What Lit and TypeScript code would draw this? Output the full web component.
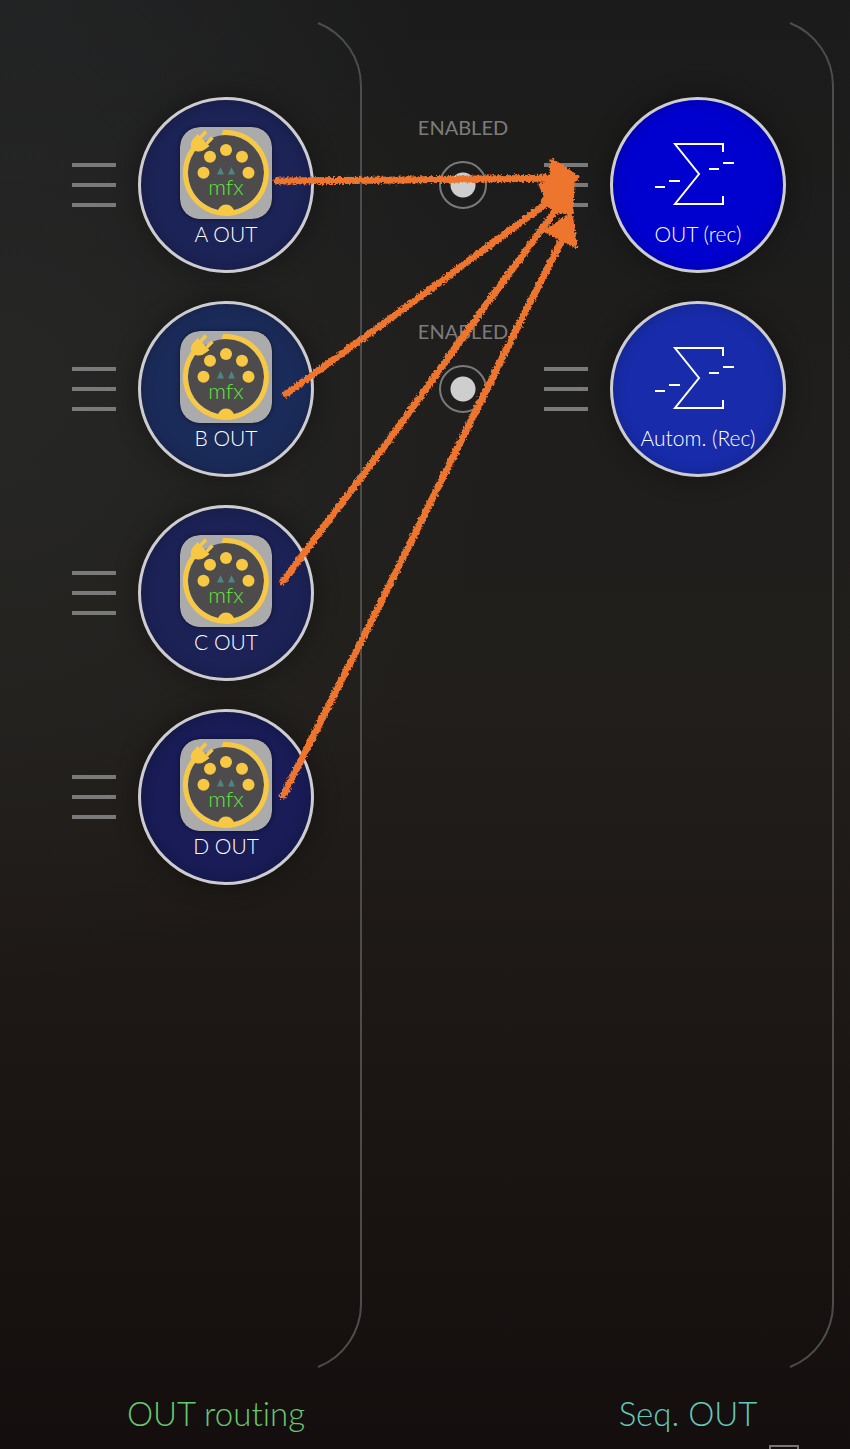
import { LitElement, html, css, svg, nothing } from "lit";
import { customElement, property } from "lit/decorators.js";

type Tone = "navy" | "steel" | "indigo" | "midnight" | "pure" | "royal";

interface PortData {
  label: string;
  tone: Tone;
  icon: "mfx" | "sum";
  enabled?: boolean;
}

const ROUTING: PortData[] = [
  { label: "A OUT", tone: "navy", icon: "mfx" },
  { label: "B OUT", tone: "steel", icon: "mfx" },
  { label: "C OUT", tone: "indigo", icon: "mfx" },
  { label: "D OUT", tone: "midnight", icon: "mfx" },
];

const SEQUENCER: PortData[] = [
  { label: "OUT (rec)", tone: "pure", icon: "sum", enabled: true },
  { label: "Autom. (Rec)", tone: "royal", icon: "sum", enabled: true },
];

const mfxIcon = html`<svg class="icon plate" viewBox="0 0 92 92" aria-hidden="true">
  <rect width="92" height="92" rx="20" fill="#ababab" />
  <circle cx="46" cy="46" r="38" fill="#4d4b4b" />
  <path d="M43 5.5 A40.5 40.5 0 1 1 17 17.5" fill="none" stroke="#f7c843" stroke-width="5" />
  <path d="M45 3.200 Q43 4 41 7.500 L47 8.200 L50 3.300 Z" fill="#f7c843" />
  <g fill="#f7c843">
    <path d="M17.500 7 L29.500 19 L27 21 Q21 26 15.500 24 L11 20 Q9.500 15 15.500 9.500 Z" />
    <path d="M20.500 10.500 L26 4.500 M26.500 16.500 L32.500 10.500" stroke="#f7c843" stroke-width="3.500" />
    <circle cx="23.500" cy="45.700" r="6" />
    <circle cx="30" cy="29.700" r="6" />
    <circle cx="46" cy="23" r="6" />
    <circle cx="62" cy="29.700" r="6" />
    <circle cx="68.500" cy="45.700" r="6" />
    <path d="M37.500 86 A8.500 8.500 0 0 1 54.500 86 Z" />
  </g>
  <path d="M37 47.500 L40.500 40 L44 47.500 Z M48 47.500 L51.500 40 L55 47.500 Z" fill="#4f8580" />
  <text class="mfx" x="46" y="68" text-anchor="middle">mfx</text>
</svg>`;

const sumIcon = html`<svg class="icon" viewBox="0 0 92 92" aria-hidden="true">
  <g fill="none" stroke="#fff" stroke-width="2">
    <path d="M71 25 V17 H23 L47 47 L23 77 H71 V69" />
    <path d="M3 60 H13 M17 54 H28 M57 42 H67 M71 36 H82" />
  </g>
</svg>`;

@customElement("route-port")
export class RoutePort extends LitElement {
  @property({ attribute: false }) port!: PortData;

  static styles = css`
    :host {
      display: flex;
      align-items: center;
      justify-content: flex-end;
      height: 176px;
    }
    button {
      font: inherit;
      color: inherit;
      border: 0;
      padding: 0;
      background: none;
      cursor: pointer;
    }
    .toggle {
      display: flex;
      flex-direction: column;
      align-items: center;
      gap: 22px;
      width: 96px;
      margin-right: 33px;
      padding-bottom: 46px;
      color: #7c7c7c;
      font-size: 20px;
      line-height: 24px;
      font-weight: 400;
    }
    .toggle input {
      appearance: none;
      box-sizing: border-box;
      width: 48px;
      height: 48px;
      margin: 0;
      border: 2px solid #7a7a7a;
      border-radius: 50%;
    }
    .toggle input:checked {
      background: radial-gradient(circle, #cecece 12px, transparent 13px);
    }
    .grip {
      display: flex;
      flex-direction: column;
      gap: 16px;
      width: 44px;
      margin-right: 22px;
    }
    .bar {
      height: 4px;
      background: #7a7a7a;
    }
    .disc {
      box-sizing: border-box;
      display: flex;
      flex-direction: column;
      align-items: center;
      gap: 3px;
      flex: none;
      width: 176px;
      height: 176px;
      padding-top: 27px;
      border: 3px solid #cdcdcf;
      border-radius: 50%;
      color: #fff;
      font-size: 21px;
      line-height: 24px;
      font-weight: 300;
      white-space: nowrap;
      box-shadow: 0 0 22px 4px rgba(0, 0, 0, 0.28), inset 0 0 14px rgba(0, 0, 0, 0.22);
    }
    .navy { background-color: #1c2356; }
    .steel { background-color: #1b2b59; }
    .indigo { background-color: #1c2256; }
    .midnight { background-color: #191c56; }
    .pure { background-color: #0000cf; }
    .royal { background-color: #182cab; }
    .icon {
      display: block;
      flex: none;
      width: 92px;
      height: 92px;
    }
    .plate {
      border-radius: 20px;
      box-shadow: 0 0 4px rgba(0, 0, 0, 0.5);
    }
    .mfx {
      font-size: 22px;
      fill: #5fe63c;
    }
  `;

  render() {
    const { label, tone, icon, enabled } = this.port;
    return html`
      ${enabled === undefined
        ? nothing
        : html`<label class="toggle">ENABLED<input type="checkbox" .checked=${enabled} /></label>`}
      <button class="grip" aria-label="Move ${label}">
        <span class="bar"></span><span class="bar"></span><span class="bar"></span>
      </button>
      <button class="disc ${tone}">${icon === "mfx" ? mfxIcon : sumIcon}<span>${label}</span></button>
    `;
  }
}

@customElement("port-column")
export class PortColumn extends LitElement {
  @property({ attribute: false }) ports: PortData[] = [];
  @property() heading = "";
  @property() tint = "green";
  @property({ type: Boolean }) tool = false;

  static styles = css`
    :host {
      display: flex;
      flex-direction: column;
      box-sizing: border-box;
      min-width: 0;
      padding-top: 21px;
    }
    .body {
      display: flex;
      justify-content: flex-end;
      gap: 3px;
      flex: 1;
    }
    .ports {
      display: flex;
      flex-direction: column;
      gap: 28px;
      padding-top: 76px;
    }
    .bracket {
      display: flex;
      flex-direction: column;
      flex: none;
      width: 45px;
    }
    .cap {
      display: block;
      width: 45px;
      height: 66px;
      fill: none;
      stroke: #4c4c4c;
      stroke-width: 2;
    }
    .line {
      flex: 1;
      border-right: 2px solid #4c4c4c;
    }
    .heading {
      width: 292px;
      margin: 24px 0 0 auto;
      font-size: 33px;
      line-height: 40px;
      font-weight: 300;
      text-align: center;
    }
    .green { color: #68c86e; }
    .teal { color: #64c8b9; }
    .tools {
      display: flex;
      justify-content: flex-end;
      box-sizing: border-box;
      height: 16px;
      padding: 12px 35px 0 0;
      overflow: hidden;
    }
    .tool {
      flex: none;
      width: 30px;
      height: 30px;
      padding: 0;
      border: 2px solid #777;
      background: none;
    }
  `;

  render() {
    return html`
      <div class="body">
        <div class="ports">${this.ports.map((p) => html`<route-port .port=${p}></route-port>`)}</div>
        <div class="bracket">
          <svg class="cap" viewBox="0 0 45 66" aria-hidden="true"><path d="M1 2 A68 68 0 0 1 44 66" /></svg>
          <div class="line"></div>
          <svg class="cap" viewBox="0 0 45 66" aria-hidden="true"><path d="M44 0 A68 68 0 0 1 1 64" /></svg>
        </div>
      </div>
      <h2 class="heading ${this.tint}">${this.heading}</h2>
      <div class="tools">
        ${this.tool ? html`<button class="tool" aria-label="Column settings"></button>` : nothing}
      </div>
    `;
  }
}

const SHAFTS = [
  "M277 181 L400 180 L560 178",
  "M286 394 L413 302 L555 197",
  "M283 581 L390 439 L488 302 L558 207",
  "M283 796 L382 600 L520 322 L566 232",
];

@customElement("app-root")
export class AppRoot extends LitElement {
  static styles = css`
    :host {
      display: block;
      font-family: Lato, "Open Sans", sans-serif;
      font-variant-ligatures: none;
    }
    .page {
      position: relative;
      display: grid;
      grid-template-columns: 362fr 472fr 16fr;
      min-height: 100vh;
      overflow: hidden;
      background:
        radial-gradient(ellipse 500px 600px at 0 380px, rgba(46, 48, 46, 0.5), transparent),
        radial-gradient(ellipse 420px 260px at 0 0, rgba(34, 36, 39, 0.6), transparent),
        linear-gradient(#1b1b1b, #1f1e1d 28%, #211e1b 48%, #1c1714 72%, #140f0e);
    }
    .marks {
      position: absolute;
      top: 0;
      left: 0;
      width: 100%;
      height: 900px;
      pointer-events: none;
    }
  `;

  render() {
    return html`
      <main class="page">
        <port-column .ports=${ROUTING} heading="OUT routing" tint="green"></port-column>
        <port-column .ports=${SEQUENCER} heading="Seq. OUT" tint="teal" tool></port-column>
        <svg class="marks" viewBox="0 0 850 900" preserveAspectRatio="none" aria-hidden="true">
          <defs>
            <filter id="chalk" filterUnits="userSpaceOnUse" x="0" y="0" width="850" height="900">
              <feTurbulence type="fractalNoise" baseFrequency="0.45" numOctaves="2" seed="4" result="grain" />
              <feDisplacementMap in="SourceGraphic" in2="grain" scale="5" xChannelSelector="R" yChannelSelector="G" />
            </filter>
          </defs>
          <g filter="url(#chalk)" fill="#ee742f" stroke="#ee742f" stroke-linejoin="round">
            ${SHAFTS.map((d) => svg`<path d=${d} fill="none" stroke-width="7" stroke-linecap="round" />`)}
            <path stroke-width="3" d="M552 160 L578 177 L573 183 L572 213 L557 212 L542 201 L545 195 L540 185 L550 181 Z" />
            <path stroke-width="3" d="M571 214 L576 247 L545 231 Z" />
          </g>
        </svg>
      </main>
    `;
  }
}
